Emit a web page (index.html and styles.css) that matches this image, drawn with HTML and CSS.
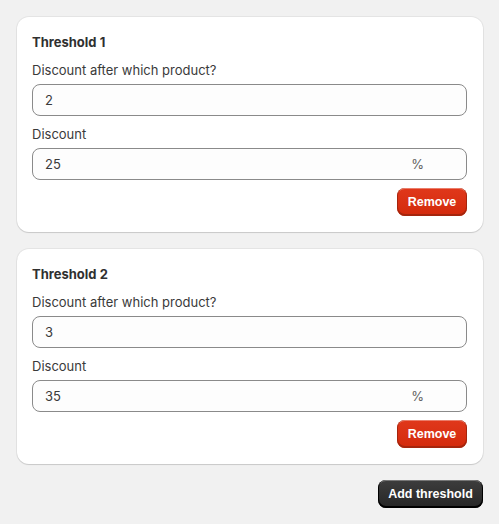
FILE: index.html
```html
<!DOCTYPE html>
<html>
<head>
<meta charset="utf-8">
<link rel="stylesheet" href="styles.css">
</head>
<body>
<div class="page">
  <div class="card">
    <h2 class="card-title">Threshold 1</h2>
    <div class="field">
      <label class="label">Discount after which product?</label>
      <div class="input"><span class="value">2</span></div>
    </div>
    <div class="field">
      <label class="label">Discount</label>
      <div class="input"><span class="value">25</span><span class="suffix">%</span></div>
    </div>
    <div class="actions"><button class="btn btn-critical">Remove</button></div>
  </div>
  <div class="card card-next">
    <h2 class="card-title">Threshold 2</h2>
    <div class="field">
      <label class="label">Discount after which product?</label>
      <div class="input"><span class="value">3</span></div>
    </div>
    <div class="field">
      <label class="label">Discount</label>
      <div class="input"><span class="value">35</span><span class="suffix">%</span></div>
    </div>
    <div class="actions"><button class="btn btn-critical">Remove</button></div>
  </div>
  <div class="footer"><button class="btn btn-primary">Add threshold</button></div>
</div>
</body>
</html>
```
FILE: styles.css
```css
* { box-sizing: border-box; }
html, body { margin: 0; padding: 0; }
body {
  background: #f1f1f1;
  font-family: Inter, "Noto Sans", sans-serif;
  font-size: 13px;
  line-height: 20px;
  color: #303030;
}
.page {
  padding: 17px 16px 16px 17px;
  display: flex;
  flex-direction: column;
  gap: 16px;
}
.card {
  background: #ffffff;
  border-radius: 12px;
  padding: 15px 16px 16px 15px;
  box-shadow: 0 1px 1px rgba(0,0,0,0.12), 0 0 0 1px rgba(0,0,0,0.05);
  display: flex;
  flex-direction: column;
  gap: 8px;
}
.card-next { margin-top: 1px; }
.card-title {
  margin: 0;
  font-size: 13px;
  font-weight: 650;
  line-height: 20px;
  color: #303030;
}
.field {
  display: flex;
  flex-direction: column;
  gap: 4px;
}
.label {
  font-size: 13px;
  line-height: 20px;
  color: #3a3a3a;
}
.input {
  height: 32px;
  border: 1px solid #8a8a8a;
  border-radius: 8px;
  background: #fdfdfd;
  display: flex;
  align-items: center;
  padding: 0 42px 0 12px;
  font-size: 13px;
}
.value { flex: 1; color: #3a3a3a; }
.suffix { color: #616161; }
.actions {
  display: flex;
  justify-content: flex-end;
}
.btn {
  height: 28px;
  border: none;
  border-radius: 8px;
  font-family: "Liberation Sans", Arial, sans-serif;
  font-weight: bold;
  font-size: 12.5px;
  color: #ffffff;
  padding: 0;
  white-space: nowrap;
  cursor: pointer;
}
.btn-critical {
  width: 70px;
  background: linear-gradient(#e0381b, #d32a0c);
  box-shadow: inset 0 -1px 0 1px #a5250d, inset 0 1px 0 rgba(255,255,255,0.35);
}
.btn-primary {
  width: 105px;
  background: linear-gradient(#3d3d3d, #262626);
  box-shadow: inset 0 -1px 0 1px #000, inset 0 1px 0 rgba(255,255,255,0.3);
}
.footer {
  display: flex;
  justify-content: flex-end;
}
```
